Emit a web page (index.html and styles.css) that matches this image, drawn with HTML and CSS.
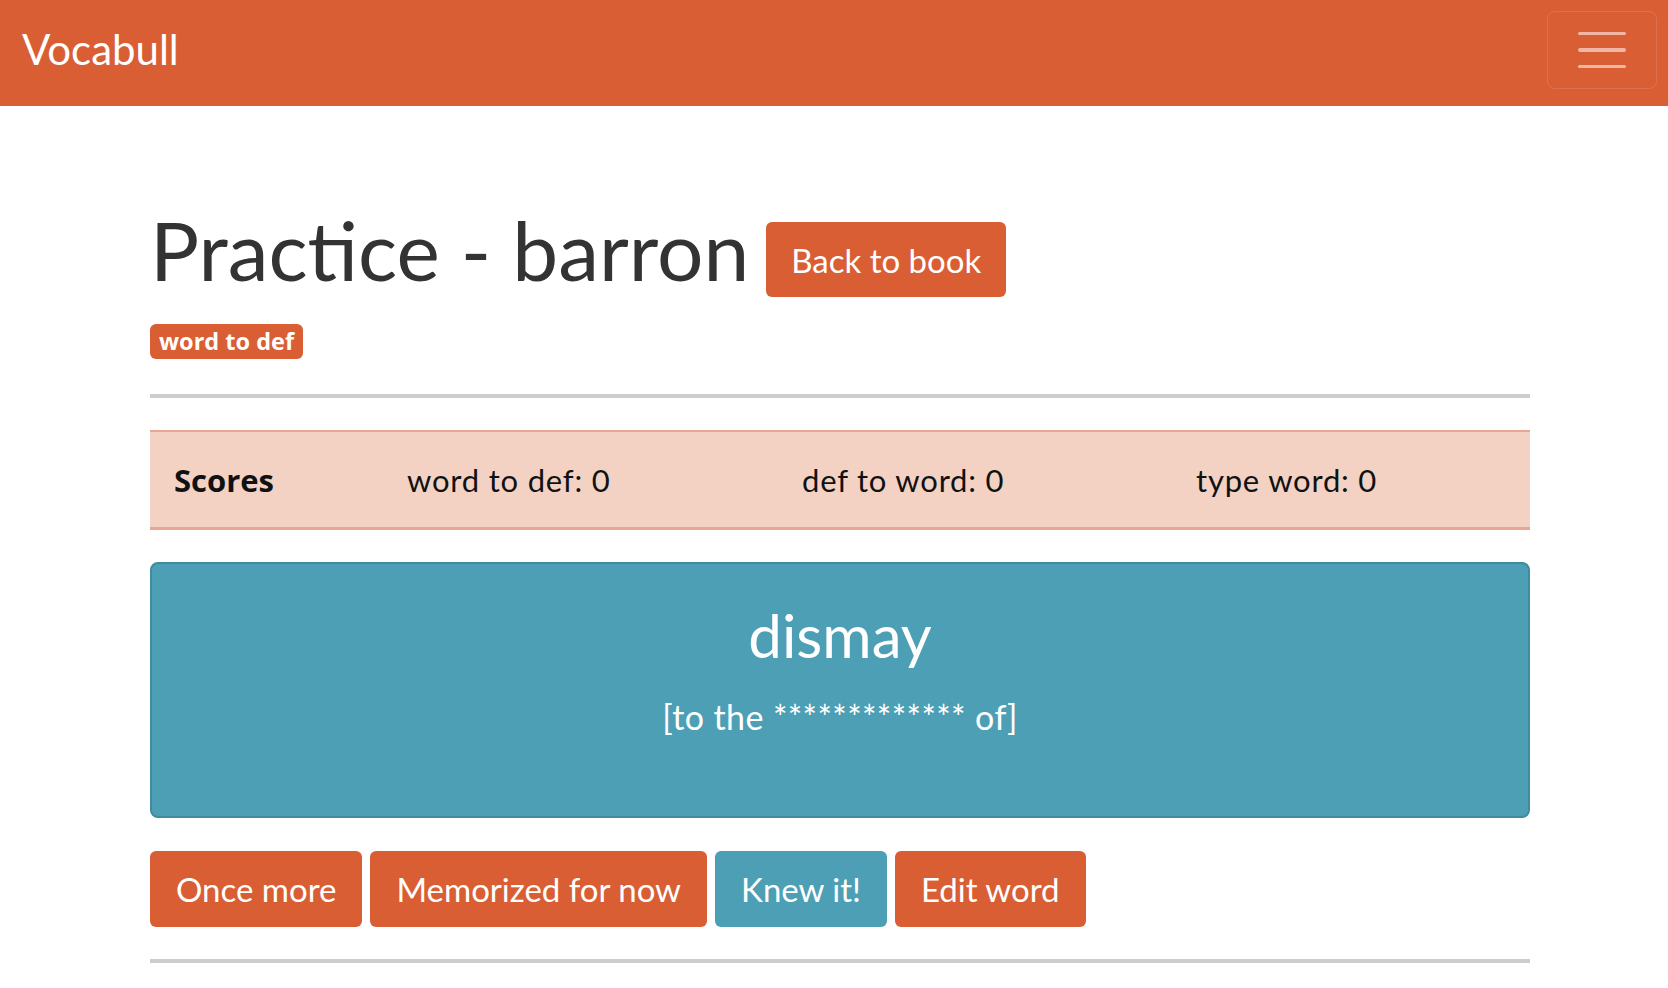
FILE: index.html
```html
<!DOCTYPE html>
<html lang="en">
<head>
<meta charset="utf-8">
<title>Vocabull - Practice</title>
<link rel="stylesheet" href="styles.css">
</head>
<body>
<nav class="navbar">
  <a class="brand" href="#">Vocabull</a>
  <button class="toggler" type="button" aria-label="Toggle navigation">
    <span class="bar"></span>
    <span class="bar"></span>
    <span class="bar"></span>
  </button>
</nav>
<main class="container">
  <div class="title-row">
    <h1 class="title">Practice - barron</h1>
    <a class="btn btn-orange btn-back" href="#">Back to book</a>
  </div>
  <div class="badge-row"><span class="badge">word to def</span></div>
  <hr class="rule">
  <div class="scores">
    <div class="cell cell-head">Scores</div>
    <div class="cell">word to def: 0</div>
    <div class="cell">def to word: 0</div>
    <div class="cell">type word: 0</div>
  </div>
  <section class="card">
    <div class="word">dismay</div>
    <div class="hint">[to the ************* of]</div>
  </section>
  <div class="actions">
    <a class="btn btn-orange btn-lg" href="#">Once more</a>
    <a class="btn btn-orange btn-lg" href="#">Memorized for now</a>
    <a class="btn btn-teal btn-lg" href="#">Knew it!</a>
    <a class="btn btn-orange btn-lg" href="#">Edit word</a>
  </div>
  <hr class="rule rule-bottom">
</main>
</body>
</html>
```

FILE: styles.css
```css
* { box-sizing: border-box; }

body {
  margin: 0;
  font-family: Lato, "Open Sans", sans-serif;
  color: #333;
  background: #fff;
}

.navbar {
  height: 106px;
  background: #d95e34;
  display: flex;
  align-items: flex-start;
  justify-content: space-between;
  padding: 0 11px 0 22px;
}

.brand {
  color: #fff;
  text-decoration: none;
  font-size: 42px;
  line-height: 52px;
  margin-top: 23px;
}

.toggler {
  margin-top: 11px;
  width: 110px;
  height: 78px;
  background: transparent;
  border: 1px solid rgba(255, 255, 255, 0.12);
  border-radius: 8px;
  display: flex;
  flex-direction: column;
  align-items: center;
  justify-content: center;
  gap: 13px;
  padding: 0;
}

.bar {
  display: block;
  width: 48px;
  height: 3.5px;
  border-radius: 2px;
  background: rgba(255, 255, 255, 0.55);
}

.container {
  width: 1380px;
  margin-left: 150px;
  padding-top: 95px;
}

.title-row {
  display: flex;
  align-items: flex-end;
  gap: 17px;
}

.title {
  margin: 0;
  font-size: 82px;
  font-weight: 400;
  line-height: 96px;
  color: #333;
}

.btn {
  display: inline-flex;
  align-items: center;
  justify-content: center;
  color: #fff;
  text-decoration: none;
  border-radius: 6px;
}

.btn-orange { background: #d95e34; }
.btn-teal { background: #4d9fb5; }

.btn-back {
  height: 75px;
  padding: 0 25px;
  font-size: 33px;
}

.badge-row {
  margin-top: 27px;
  display: flex;
}

.badge {
  display: inline-flex;
  align-items: center;
  height: 35px;
  padding: 0 9px 2px;
  border-radius: 6px;
  background: #d95e34;
  color: #fff;
  font-family: "Open Sans", Lato, sans-serif;
  font-weight: 700;
  font-size: 23.5px;
  letter-spacing: 0;
}

.rule {
  margin: 35px 0 0;
  border: 0;
  height: 4px;
  background: #cdcdcd;
}

.scores {
  margin-top: 32px;
  height: 100px;
  display: grid;
  grid-template-columns: 233px 395px 394px 1fr;
  align-items: center;
  background: #f3d2c4;
  border-top: 2px solid #e7a792;
  border-bottom: 3px solid #e7a792;
  color: #111;
  font-size: 31px;
  letter-spacing: 0.8px;
}

.cell { padding-left: 24px; }
.cell-head {
  font-family: "Open Sans", Lato, sans-serif;
  font-weight: 700;
  font-size: 31px;
  letter-spacing: 0;
}

.card {
  margin-top: 32px;
  height: 256px;
  background: #4d9fb5;
  border: 2px solid #3f8ba0;
  border-radius: 8px;
  color: #fff;
  display: flex;
  flex-direction: column;
  align-items: center;
  padding-top: 35px;
}

.word {
  font-size: 60px;
  line-height: 72px;
}

.hint {
  margin-top: 26px;
  font-size: 34px;
  line-height: 40px;
  letter-spacing: 0.4px;
}

.actions {
  margin-top: 33px;
  display: flex;
  gap: 8px;
}

.btn-lg {
  height: 76px;
  padding: 0 26px;
  font-size: 33px;
}

.rule-bottom {
  margin-top: 32px;
}
```
